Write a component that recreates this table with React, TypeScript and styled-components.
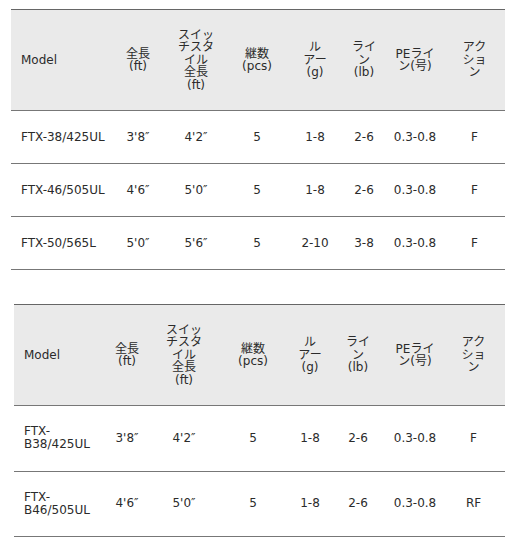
import React from 'react';
import styled, { createGlobalStyle } from 'styled-components';

const GlobalStyle = createGlobalStyle`
    html, body {
        margin: 0;
        padding: 0;
        background: #ffffff;
        overflow: hidden;
    }
    body {
        font-family: "DejaVu Sans", "Noto Sans CJK JP", sans-serif;
        font-size: 12px;
        color: #2b2b2b;
    }
`;

const Page = styled.div`
    display: flex;
    flex-direction: column;
    width: 505px;
`;

interface SpecTableProps {
    indent: number;
    gapTop: number;
}

const SpecTable = styled.table<SpecTableProps>`
    margin-top: ${({ gapTop }) => gapTop}px;
    margin-left: ${({ indent }) => indent}px;
    width: ${({ indent }) => 505 - indent}px;
    border-collapse: collapse;
    table-layout: fixed;
`;

const HeadCell = styled.th<{ left?: boolean }>`
    height: 100px;
    padding: ${({ left }) => (left ? '0 0 0 10px' : '0')};
    background: #eaeaea;
    border-top: 1px solid #666666;
    border-bottom: 1px solid #777777;
    font-weight: normal;
    line-height: 12.5px;
    white-space: nowrap;
    text-align: ${({ left }) => (left ? 'left' : 'center')};
    vertical-align: middle;
`;

const BodyCell = styled.td<{ left?: boolean; rowHeight: number }>`
    height: ${({ rowHeight }) => rowHeight}px;
    padding: ${({ left }) => (left ? '0 2px 0 10px' : '0')};
    border-bottom: 1px solid #777777;
    line-height: 13px;
    text-align: ${({ left }) => (left ? 'left' : 'center')};
    vertical-align: middle;
    white-space: ${({ left }) => (left ? 'normal' : 'nowrap')};
`;

const headers: string[][] = [
    ['Model'],
    ['全長', '(ft)'],
    ['スイッ', 'チスタ', 'イル', '全長', '(ft)'],
    ['継数', '(pcs)'],
    ['ル', 'アー', '(g)'],
    ['ライ', 'ン', '(lb)'],
    ['PEライ', 'ン(号)'],
    ['アク', 'ショ', 'ン'],
];

interface TableData {
    indent: number;
    gapTop: number;
    rowHeight: number;
    widths: number[];
    rows: string[][];
}

const tables: TableData[] = [
    {
        indent: 11,
        gapTop: 9,
        rowHeight: 52,
        widths: [99, 56, 60, 62, 54, 44, 58, 61],
        rows: [
            ['FTX-38/425UL', '3\'8″', '4\'2″', '5', '1-8', '2-6', '0.3-0.8', 'F'],
            ['FTX-46/505UL', '4\'6″', '5\'0″', '5', '1-8', '2-6', '0.3-0.8', 'F'],
            ['FTX-50/565L', '5\'0″', '5\'6″', '5', '2-10', '3-8', '0.3-0.8', 'F'],
        ],
    },
    {
        indent: 14,
        gapTop: 34,
        rowHeight: 64.5,
        widths: [86, 54, 60, 78, 36, 60, 54, 63],
        rows: [
            ['FTX-B38/425UL', '3\'8″', '4\'2″', '5', '1-8', '2-6', '0.3-0.8', 'F'],
            ['FTX-B46/505UL', '4\'6″', '5\'0″', '5', '1-8', '2-6', '0.3-0.8', 'RF'],
        ],
    },
];

const Spec: React.FC<{ data: TableData }> = ({ data }) => (
    <SpecTable indent={data.indent} gapTop={data.gapTop}>
        <colgroup>
            {data.widths.map((w, i) => (
                <col key={i} style={{ width: w }} />
            ))}
        </colgroup>
        <thead>
            <tr>
                {headers.map((lines, i) => (
                    <HeadCell key={i} left={i === 0}>
                        {lines.map((line, j) => (
                            <React.Fragment key={j}>
                                {j > 0 && <br />}
                                {line}
                            </React.Fragment>
                        ))}
                    </HeadCell>
                ))}
            </tr>
        </thead>
        <tbody>
            {data.rows.map((row, r) => (
                <tr key={r}>
                    {row.map((cell, c) => (
                        <BodyCell key={c} left={c === 0} rowHeight={data.rowHeight}>
                            {cell}
                        </BodyCell>
                    ))}
                </tr>
            ))}
        </tbody>
    </SpecTable>
);

const App: React.FC = () => (
    <Page>
        <GlobalStyle />
        {tables.map((t, i) => (
            <Spec key={i} data={t} />
        ))}
    </Page>
);

export default App;
